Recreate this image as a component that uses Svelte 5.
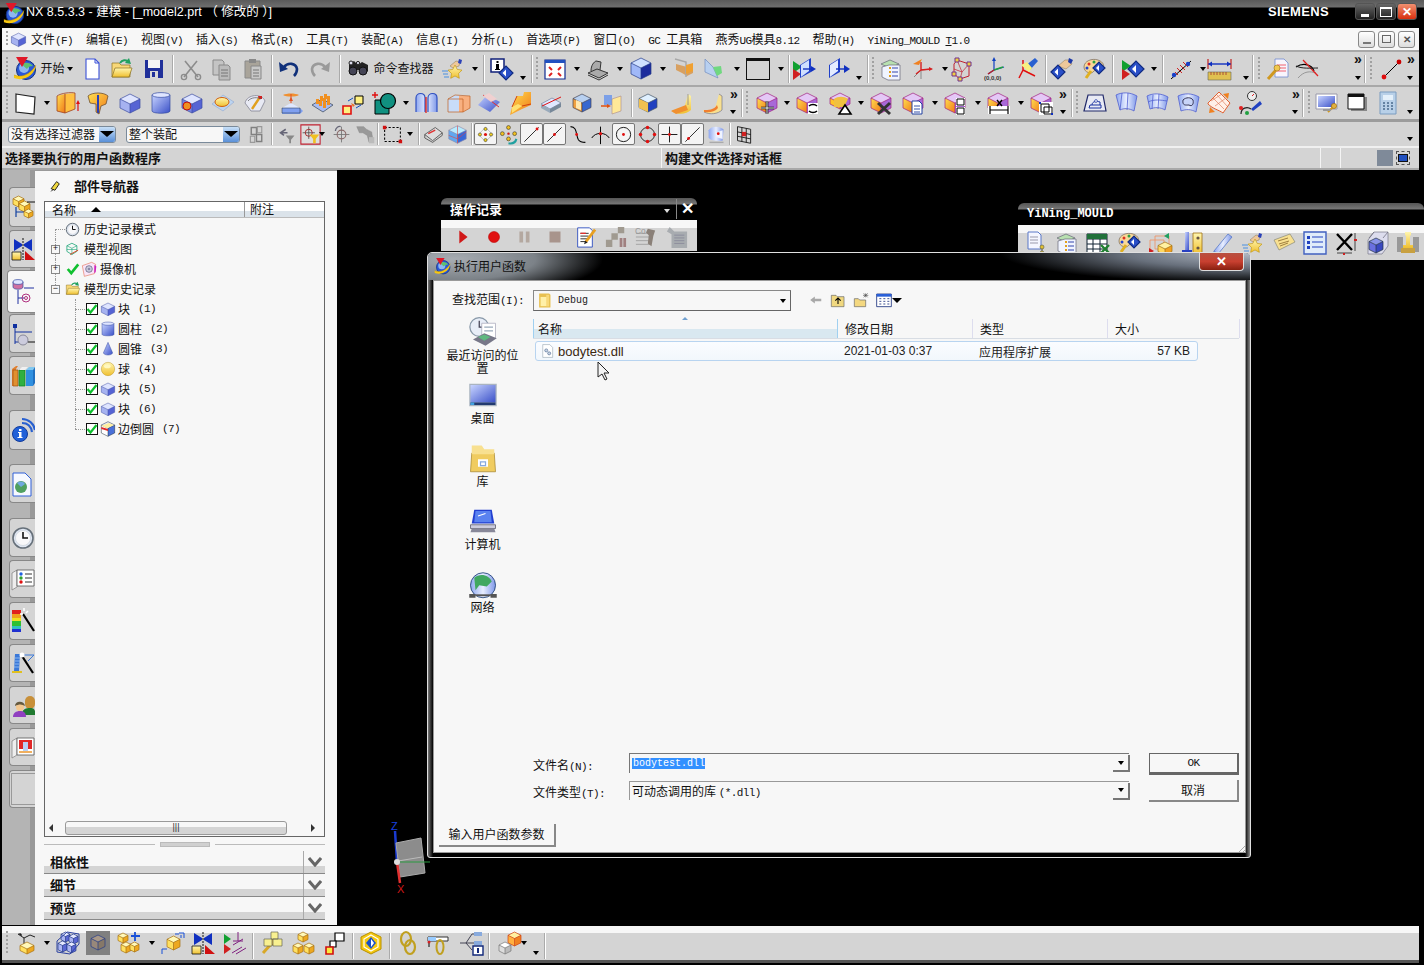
<script>
const P=(d,s='#000',w=1,f='none')=>`<path d="${d}" fill="${f}" stroke="${s}" stroke-width="${w}"/>`;
const F=(d,f='#000')=>`<path d="${d}" fill="${f}"/>`;
const O=(x,y,r,f,s='none',w=1)=>`<circle cx="${x}" cy="${y}" r="${r}" fill="${f}" stroke="${s}" stroke-width="${w}"/>`;
const C=(x,y,w,h,t,l,r,s='#223a88')=>{const a=w*.25,m=x+w/2;return F(`M${x} ${y+a}L${m} ${y}L${x+w} ${y+a}L${m} ${y+2*a}Z`,t)+F(`M${x} ${y+a}L${m} ${y+2*a}V${y+h}L${x} ${y+h-a}Z`,l)+F(`M${x+w} ${y+a}L${m} ${y+2*a}V${y+h}L${x+w} ${y+h-a}Z`,r)+P(`M${x} ${y+a}L${m} ${y}L${x+w} ${y+a}V${y+h-a}L${m} ${y+h}L${x} ${y+h-a}ZM${x} ${y+a}L${m} ${y+2*a}L${x+w} ${y+a}M${m} ${y+2*a}V${y+h}`,s,.7)};
const bc=(x,y,w,h)=>C(x,y,w,h,'#e4e8ff','#aab4f2','#5a66d4');
const yc=(x,y,w,h)=>C(x,y,w,h,'#fff8b8','#ffe060','#eda820','#a87010');
const pf=C(2,2,20,20,'#e4c8f6','url(#go)','#a868d8','#a02080');
const diamond=(x,y,r)=>P(`M${x-r} ${y}L${x} ${y-r}L${x+r} ${y}L${x} ${y+r}Z`,'#102a80',1.2,'#2a50c8')+F(`M${x-r*.5} ${y}L${x} ${y-r*.5}V${y+r*.5}Z`,'#fff');
const starS='M14 8l2.2 4.4 4.8.7-3.5 3.4.8 4.8-4.3-2.3-4.3 2.3.8-4.8-3.5-3.4 4.8-.7z';
const hand=F('M9 9l6-5 4 1-1 4-6 2z','#eec89a')+P('M9 9l6-5 4 1-1 4-6 2z','#875',.5)+F('M18 2l3 1-1 4-3-1z','#2a40b8');
const cyl=(x,y,w,h,c='url(#gb)')=>`<path d="M${x} ${y+2}V${y+h-2}C${x} ${y+h+1} ${x+w} ${y+h+1} ${x+w} ${y+h-2}V${y+2}Z" fill="${c}" stroke="#334aa0" stroke-width=".7"/><ellipse cx="${x+w/2}" cy="${y+2}" rx="${w/2}" ry="2.4" fill="#dfe5ff" stroke="#334aa0" stroke-width=".7"/>`;
const folder=P('M2 20V6h7l2 2h9v12z','#8a7020',.7,'#f8d878')+P('M2 20l3-9h17l-3 9z','#8a7020',.7,'url(#gy)');

const I={
start:O(13,13,9.5,'#2a58d8','#103080')+O(11,11,5,'#8fb8f0')+F('M8 7c4-2 9-2 12 2-3 0-5 1-6 3z','#60c070')+F('M1 18c7 3 16 0 22-10-1 10-12 17-22 13z','#f8c810')+P('M1 18c7 3 16 0 22-10','#c09000',.5)+F('M3 0h12l-6 10z','#e01828'),
new:P('M6 2h9l4 4v16H6z','#3a50d8',1.1,'#fff')+P('M15 2v4h4','#3a50d8'),
open:folder+P('M10 6c2-3 6-4 9-1','#20a060',2)+F('M19 1l2 6-6-1z','#20a060'),
save:F('M3 3h18v18H3z','#20309a')+F('M6 3h12v8H6z','#f4f4f4')+F('M8 14h8v7H8z','#d8d8d8')+F('M10 15h3v5h-3z','#20309a'),
cut:P('M5 20L18 4M19 20L6 4','#8c8c8c',1.6)+O(5,20,2.6,'none','#8c8c8c',1.4)+O(19,20,2.6,'none','#8c8c8c',1.4),
copy:P('M3 3h9l2 2v13H3z','#8a8a8a',1,'#c4c4c4')+P('M9 8h9l2 2v13H9z','#8a8a8a',1,'#bbb')+P('M11 13h7M11 16h7M11 19h7','#777'),
paste:P('M4 4h15v17H4z','#8a8a8a',1,'#a9a49a')+F('M8 2h7v4H8z','#888')+P('M10 9h10v13H10z','#888',1,'#c8c8c8')+P('M12 13h6M12 16h6M12 19h6','#777'),
undo:P('M7 10c4-5 12-4 13 2 0 3-1 5-3 7','#10307a',2.6)+F('M2 5l1 10 8-3z','#10307a'),
redo:P('M17 10c-4-5-12-4-13 2 0 3 1 5 3 7','#9a9a9a',2.6)+F('M22 5l-1 10-8-3z','#9a9a9a'),
binoc:F('M3 7l5-3 4 4 4-3 6 3v6l-4 4-5-5h-2l-3 4-5-3z','#222')+O(7,14,4,'#445','#111')+O(17,14,4,'#445','#111')+O(5,6,2,'#dde','#222')+O(12,6,1.6,'#dde','#222'),
star:hand+P(starS,'#c09000',.6,'url(#gy)')+P('M1 14h6M2 17h5M3 20h5','#4a90e0',1.2),
info:F('M1 2h13v13H1z','#fff')+P('M1 2h13v13H1z','#10207a',1.5)+F('M6.5 4h2v2h-2zM6 7h3v5h1v1H5v-1h1z','#000')+diamond(16,16,7),
fit:P('M2 3h20v19H2z','#102a90',1.2,'#fff')+F('M2 3h20v3H2z','#2050c0')+P('M6 10l3 3M18 10l-3 3M6 19l3-3M18 19l-3-3','#e02020',2),
shade:F('M2 16l9-4 11 4-9 5z','#e0e0e0')+P('M2 16l9-4 11 4-9 5zM5 14c0-6 3-9 5-10l5 1-1 8','#333',1,'#aaa')+P('M2 18l11 5 9-5','#333'),
cubeb:C(2,1,20,21,'#cfe0ff','#a0b8f8','#1c2c9c'),
orange:F('M4 7l11 3 6-2v8l-6 3-5-3-6-3z','#d8a060')+P('M3 2l11 3v15','#a8a8a8',1.5)+F('M14 8l7-2v8l-7 3z','#f0a030'),
green:F('M3 2l8 8 5 11-13-6z','#b8d0f0')+P('M3 2l8 8 5 11-13-6z','#708cc0',.7)+F('M11 10l8-1 1 7-5 3z','#70d880'),
blackrect:F('M0 1h24v22H0z','#111')+F('M1 4h22v18H1z','#d4d4d4'),
wire1:F('M1 4l9 6-9 6z','#10a030')+F('M1 12l8 5-8 6z','#d02020')+F('M8 8l11-7v14L8 21z','#2040c8')+F('M9 8l8-5v11l-8 6z','#cfdfff')+P('M11 12h11','#1030c0',1.4)+F('M24 12l-5-3v6z','#1030c0'),
wire2:F('M3 8l11-7v14L3 21z','#2040c8')+F('M4 8l8-5v11l-8 6z','#e4ecff')+P('M10 12h9','#1030c0',1.4)+F('M24 12l-6-4v8z','#1030c0'),
list:P('M2 7l9-4 9 4-9 4z','#667',.7,'#b8e0b0')+P('M3 10v10l6 3h12V8H10z','#667',.7,'#f0f4ff')+P('M13 11h6M13 15h6M13 19h6','#34a',1)+F('M10 10h2v2h-2zM10 14h2v2h-2zM10 18h2v2h-2z','#e0a020'),
csys1:P('M11 13l-7 7M11 13V22M11 13l11-1','#888')+P('M11 13L11 5M11 13l10-1M11 13l-5 4','#d82020',1.4)+F('M3 7l9-5-3 6z','#f08020')+F('M23 12l-4-2v4z','#d82020'),
boxc:P('M7 3l12 4v12L10 22 4 17V7z','#c02030',1)+P('M7 3l5 12 7-8M12 15l-2 7M4 12l8 3','#c02030',.7)+F('M5 1h4v4H5zM17 5h4v4h-4zM2 15h4v4H2zM8 20h4v4H8z','#f0d040')+P('M5 1h4v4H5zM17 5h4v4h-4zM2 15h4v4H2zM8 20h4v4H8z','#703090',1),
csys0:P('M10 13V2M10 13l10-3M10 13l-6 4','#1040c0',1.2)+P('M10 13l9-3','#20a040',1.4)+P('M10 13l-6 4','#c02020',1.4)+F('M10 0l-2 4h4z','#1040c0')+`<text x="0" y="23" font-size="6" font-weight="700" font-family="Liberation Sans" fill="#333">(0,0,0)</text>`,
csys2:P('M8 13V3M8 13l12 6M8 13l-4 8','#e01010',1.5)+F('M10 9l10-8 3 3-8 9z','#2860d0')+F('M6 8l6-3 5 6-3 4z','#f8f080'),
hand:F('M8 9l7-6h5l2 4-6 5z','#eec89a')+P('M8 9l7-6h5l2 4-6 5z','#875',.5)+F('M19 1l4 2-2 4-3-2z','#1c38a8')+diamond(8,15,7),
palette:F('M2 10C2 4 10 1 16 3c6 2 7 7 4 9-3 1-7 0-9 3-1 2-9 1-9-5z','#f8d898')+P('M2 10C2 4 10 1 16 3c6 2 7 7 4 9-3 1-7 0-9 3-1 2-9 1-9-5z','#765',.7)+O(7,7,1.5,'#e03020')+O(12,5,1.5,'#30a040')+O(5,11,1.5,'#2040d0')+diamond(17,11,6)+P('M9 14l-5 7','#e0b020',3),
run:F('M1 3l9 6-9 6z','#10a030')+F('M1 12l8 5-8 6z','#d02020')+diamond(15,12,8),
ant:P('M2 22L22 4','#000',1)+P('M8 11l5 5M11 8l5 5M14 5l5 5M6 15l3 3','#d02020',1)+O(5,18,2.2,'#1840c8')+O(19,7,2.2,'#1840c8'),
ruler:F('M1 15h23v8H1z','#e0c050')+P('M1 15h23v8H1z','#665',.6)+P('M4 15v3M7 15v3M10 15v3M13 15v3M16 15v3M19 15v3','#a03030',.8)+P('M1 7h23','#1030c0',1.4)+P('M1 2v10M24 2v10','#c02020',1.2)+F('M1 7l4-2.5v5zM24 7l-4-2.5v5z','#1030c0'),
wrdoc:P('M10 2h9l4 4v14H10z','#708ad0',.8,'#f8f4fc')+P('M12 8h9M12 11h9M12 14h9','#f06070',1.2)+P('M3 22l8-9','#d09820',3)+O(12,11,3,'#f0c850','#a07010',.6),
curve:P('M1 10c8-5 16-2 18 4','#000',1.2)+P('M3 21c6-7 12-7 18-5','#888',.8)+P('M8 3l15 16','#e02020',1.2)+P('M1 9c6 3 15 2 22 2','#222',1),
line:P('M5 20L20 5','#000',1)+O(5,20,2.4,'#e01010')+O(20,5,2.4,'#c00'),
sheet:P('M3 3l19 3-1 17-18-2z','#222',1.2,'#fff'),
extrude:F('M2 5l8-2v19l-8-2z','url(#go)')+F('M10 3l10-1v16l-10 4z','#ffc040')+P('M2 5c4-3 14-4 18-3v16M2 5v15l8 2 10-4M10 3v19','#a04020',.8)+P('M23 20v-8','#e01010',1.2)+F('M23 9l-2 4h4z','#e01010'),
revolve:F('M2 5c4-4 16-4 20 0l-2 8-5 2-2 8-3-2V13L4 12z','url(#go)')+F('M11 4h2v18h-2z','#2840b8')+P('M2 5c4-4 16-4 20 0l-2 8-5 2-2 8-3-2V13L4 12z','#705030',.8),
block:C(2,3,20,19,'#dfe5ff','#a6b2f0','#5664d4','#3a4aa0'),
cyl:cyl(3,2,18,20),
holeb:C(2,3,20,19,'#dfe5ff','#7884e0','#5664d4','#3a4aa0')+O(7,15,4,'#f09020','#c01010',1),
boss:P('M1 13L12 4l11 7-11 9z','#90a8d0',.6,'#bcd4f0')+`<ellipse cx="11" cy="11" rx="7" ry="4.5" fill="url(#gy)" stroke="#d06010"/>`,
gauge:P('M2 12C4 3 19 2 22 10l-5 10-9 0z','#778',.7,'#e8eaf4')+P('M9 18L17 6','#e0a020',2.4)+F('M15 5h4v3h-3z','#d02020')+P('M5 10c3-4 10-4 13-2','#555',.7),
draft:F('M4 4c4-2 12-2 16 0-3 2-13 2-16 0z','#f09030')+P('M12 3v10','#e05020',1)+F('M12 6l-2 4h4z','#e05020')+F('M3 17h18l3 3-3 3H3z','#80a0f0')+F('M3 17l9-5 9 5z','#dfe8ff')+P('M3 17h18v5H3z','#234',.5),
pattern:F('M2 14l10-6 11 6-10 7z','#aabcf0')+P('M2 14l10-6 11 6-10 7z','#345',.7)+[[6,12],[10,9],[14,7],[9,14],[13,11],[17,9],[13,16],[17,13]].map(([x,y])=>F(`M${x} ${y-4}h3v5h-3z`,'#f09020')).join(''),
nodes:P('M14 5h8v8h-8z','#000',1,'#fff080')+P('M2 15h8v8H2z','#e01010',1.6,'#fff080')+P('M7 10l5-3M15 17l5-3','#1050c0',1)+F('M10 12l4 2-2 2z','#f07020'),
shapes:F('M2 9h14v14H2z','#109080')+P('M2 9h14v14H2z','#000',1)+O(15,10,7.5,'#109080','#000',1.2)+P('M2 1v6M-1 4h6','#e01010',1.4),
arcs:P('M1 21V7c0-6 9-6 9 0v14M13 21V7c0-6 9-6 9 0v14','#3050c0',1.2,'url(#gl)')+P('M11 6v16','#e01010',1.2),
ghost:F('M2 8l7-4 15 1v12l-7 4H2z','#c8dcf8')+F('M13 5h11v12l-7 4h-4z','#f8b080')+P('M2 8l7-4 15 1v12l-7 4H2zM2 8h15v13','#c06020',.7),
sweepb:F('M1 14l9-10 13 7-10 10z','url(#gb)')+P('M6 4l16 12','#e03030',1)+F('M6 5l6-3 8 6-6 3z','#f0d0d0'),
flange:F('M4 16L9 5h6l1-4h7v13l-9 4-12 6z','url(#go)')+F('M4 16l6-3 4 2-10 7z','#ffe070')+P('M4 16L9 5M14 15l9-2','#d04010',1),
hbar:P('M2 13l11-6 9 5-11 6z','#607090',.6,'#dfe8ff')+F('M2 13v4l9 5v-4z','#9ab')+F('M11 18v4l11-6v-4z','#789')+P('M3 15L22 6','#e01010',1),
shell:C(3,3,18,18,'#b8d0f0','#f0a040','#3868d0','#445')+F('M6 9l5 2v8l-5-2z','#ffe8b0'),
mirror:F('M4 4h8v10H4z','#7ca0e8')+F('M12 8l9-3v15l-9 3z','#ffe898')+P('M12 8l9-3v15l-9 3z','#a88',.6)+P('M1 15h8','#e05010',1.5)+F('M11 15l-4-2v4z','#e05010'),
sec:C(2,3,18,18,'#e0f0ff','#f0a030','#2040c0','#456')+F('M2 8l9 4v9l-9-4z','#f0c050'),
bend1:F('M19 3l3 2v14c-4 4-12 5-18 2l-1-2c6 1 12 0 13-5z','url(#gy)')+F('M17 14L4 19l-2 1 5 3 12-4z','#f09030')+P('M19 3v11','#778',.7),
bend2:F('M19 3l3 2v14c-4 4-12 5-18 2l-1-2c6 1 12 0 13-5z','#f8e090')+P('M19 3l3 2v14c-4 4-12 5-18 2','#778',.7)+F('M4 19c4 0 10 0 13-5l1 3c-3 4-9 5-14 4z','#f08030'),
fmove:pf+P('M12 10v13M6 17h13','#000',2.6)+P('M12 10v13M6 17h13','#fff',1),
fswap:pf+F('M13 12h10v11H13z','#fff')+P('M14 15c2-2 6-2 8 0M22 20c-2 2-6 2-8 0','#000',1.4),
ftri:C(2,2,20,16,'#e4c8f6','#ffc428','#a868d8','#a02080')+F('M6 8c4-3 10-3 14 0l-4 8-10 0z','#f0c040')+P('M17 14l-6 9h12z','#000',1.6,'#fff'),
fx:pf+P('M9 12l12 11M21 12L9 23','#333',3),
fdoc:pf+P('M11 10h7l3 3v10H11z','#2040a0',1,'#fff')+P('M13 15h6M13 18h6M13 21h6','#2040a0',.9),
fsq:pf+F('M13 7h9v8h-9zM13 16h9v8h-9z','#fff')+P('M14 8h7v6h-7zM14 17h7v6h-7z','#000',1),
fdim:pf+F('M2 15h22v8H2z','#fff')+P('M4 15v8M22 15v8M4 19h18','#000',1.2)+P('M11 9l5 6M16 9l-5 6','#000',1.4),
fbox:pf+F('M10 11h14v13H10z','#fff')+P('M12 13h8v8h-8zM15 16h8v7h-8z','#000',1)+F('M10 11h2v2h-2zM22 22h2v2h-2z','#1030c0'),
plate:P('M5 4h15l3 16H1z','#202868',1.2,'#e8eaf4')+P('M7 14h11v3H6zM9 14c0-4 5-4 8-3v3','#1830a0',1)+O(13,10,1.4,'#fff','#1830a0',.7),
surf1:F('M2 4c6-3 14-3 21 1l-3 15c-5-3-10-3-14-1z','url(#gl)')+P('M2 4c6-3 14-3 21 1l-3 15c-5-3-10-3-14-1zM8 2L6 19M14 2l-1 17','#5060d0',.8),
surf2:F('M2 5c6-3 14-3 21 1l-3 13c-5-3-10-3-15-1z','url(#gl)')+P('M2 5c6-3 14-3 21 1l-3 13c-5-3-10-3-15-1zM8 4L7 18M14 3l-1 15M3 11c6-3 13-2 19-1','#5060d0',.8),
surf3:F('M2 5c6-3 14-3 21 1l-3 15c-5-3-10-3-15-1z','url(#gl)')+P('M7 9c3-3 8-3 10 0 1 4-1 7-4 5-3 0-7 1-6-5z','#335',1,'#c8d4f8')+P('M2 5c6-3 14-3 21 1l-3 15c-5-3-10-3-15-1z','#5060d0',.8),
net1:F('M1 12L12 1l11 11-7 10c-4-3-10-4-15-9z','#fff0e8')+P('M1 12L12 1l11 11-7 10c-4-3-10-4-15-9z','#e06030',1)+P('M6 7l11 11M10 4l10 11M4 10l11-7M8 15l11-8','#e08060',.7)+F('M16 3l6-1-1 6zM3 16l5 5-6 1z','#f08020'),
sim:O(14,5,4.5,'#eee','#333',1)+P('M14 5l2-2','#e02020',1)+F('M13 18l9-8 2 3-9 7z','#2040c0')+P('M3 23c0-6 6-8 10-5','#222',1.2)+O(3,17,2,'#e02020')+O(9,22,2,'#20a040'),
screen:F('M1 3h21v15H1z','#fff')+P('M1 3h21v15H1z','#99a',1)+F('M3 5h17v11H3z','url(#gb)')+P('M13 21l6-6','#d09820',2)+O(19,15,2.6,'#e0b040','#a07010',.7)+P('M8 19h8','#999',2),
wnd:F('M6 6h16v14H6z','#888')+F('M3 3h16v15H3z','#fff')+P('M3 3h16v15H3z','#111',1)+F('M3 3h16v3H3z','#111'),
calc:P('M4 1h16v22H4z','#7a9cc0',1,'#b8d0e8')+F('M7 4h10v5H7z','#e4f0fa')+P('M7 12h2M11 12h2M15 12h2M7 15h2M11 15h2M15 15h2M7 18h2M11 18h2M15 18h2','#48698c',1.6),
chains:P('M6 4h6v8H6zM12 12h6v8h-6z','#808080',1.6)+P('M13 3h5v7h-5zM5 14h5v7H5z','#999',1.3),
ffun:P('M10 6l-6 4 4 3M4 10h8','#667',1.8)+F('M10 13h10l-4 5v4h-2v-4z','#888'),
filt:F('M1 1h22v22H1z','#dedede')+P('M1 1h22v22H1z','#c02030',1.2)+P('M10 3v14M3 10h14','#555',1)+O(10,10,4,'none','#a02020',1)+F('M11 12h11l-4 5v5h-3v-5z','#f0c020'),
tgt:P('M12 3v18M3 12h18','#777',1)+O(12,12,5,'none','#8a6a6a',1.2)+P('M5 8c0-4 4-6 6-5','#667',1.5),
gr2:P('M2 3h8l3 3 6 3 2 12h-5l-2-8-5-3H5z','#888',.5,'#999')+F('M16 15h6v7h-6z','#bbb'),
dash:P('M3 4h18v16H3z','#000',1.2).replace('/>',' stroke-dasharray="2.5 2"/>')+F('M1 2h4v4H1zM19 18h4v4h-4z','#d01010'),
v1:F('M2 12L14 4l8 6-11 9z','#ddd')+P('M2 12L14 4l8 6-11 9zM2 12v4l9 5 11-8v-3','#333',.8)+P('M6 11l8-4','#e03030',1.5),
v2:C(2,2,20,20,'#b8ecff','#60a8f0','#3868d8','#88a')+P('M2 13l10 4 10-8M12 2v20','#e04040',.7),
snap0:P('M12 3l9 9-9 9-9-9z','#888',.6,'#f4f4f4')+O(12,12,2,'#e01010')+[[12,5],[12,19],[5,12],[19,12]].map(([x,y])=>O(x,y,2,'#f0d020','#222',.6)).join(''),
snap1:[[12,4],[5,11],[19,11],[12,17]].map(([x,y])=>O(x,y,2.2,'#f0c020','#222',.6)).join('')+O(12,11,1.4,'#d01010')+P('M12 22c5 1 8-1 9-5','#20a0a0',2.4),
ln1:P('M3 21L21 3','#000',1)+O(19,5,1.8,'#e01010'),
ln2:P('M3 21L21 3','#000',1)+O(12,12,1.8,'#e01010'),
tan:P('M4 3c8 0 6 10 9 15 2 3 5 3 8 3','#000',1.2)+O(11,12,1.6,'#e01010'),
perp:P('M2 16c4-7 16-7 20 0M12 3v20','#000',1.1)+O(12,11,1.8,'#e01010'),
cir:O(12,12,9,'none','#000',1.1)+O(12,12,1.8,'#e01010'),
cir4:O(12,12,8,'none','#222',1.1)+[[12,4],[12,20],[4,12],[20,12]].map(([x,y])=>O(x,y,2,'#e01010')).join(''),
plus:P('M12 2v20M2 12h20','#000',1.1)+O(12,12,1.8,'#e01010'),
diag:P('M3 21L21 3','#000',1)+O(7,17,1.8,'#e01010'),
bs:F('M3 7c3-5 12-5 17-1l-1 13c-6 1-13 0-16-3z','url(#gl)')+F('M11 10l8-3v10l-7-2z','#f0f4ff')+O(14,11,1.6,'#e01010')+P('M4 21h16','#aaa',1.6),
grid:P('M4 3l15 3v16L4 19zM9 4v16M14 5v16M4 9l15 3M4 14l15 3','#111',1)+F('M9 9h5v5H9z','#d02020'),
play:F('M8 5l9 7-9 7z','#d01818'),
rec:O(12,12,6,'#e01010','#b00',.6),
pause:F('M7 6h4v12H7zM14 6h4v12h-4z','#b4a8a0'),
stop:F('M6 6h12v12H6z','#a8948c'),
edit:P('M4 2h13l3 3v18H4z','#3050c0',1,'#fff')+P('M7 8h9M7 11h9M7 14h9M7 17h7','#222',1)+P('M7 8h6','#e03030',1.4)+P('M13 17L23 4','#e8a020',3)+F('M11 20l1-4 3 2z','#222'),
gr1:F('M14 1h7v7h-7zM7 8h7v7H7zM1 15h7v8H1z','#a09a90')+F('M16 13h3v10h-3zM20 13h3v10h-3z','#a08080'),
gr3:P('M1 8h16M1 12h16M1 16h16M1 20h16','#a0a0a0',1)+F('M14 3l8 2-2 6-2 11-4-3 1-9-3-3z','#8a8078')+`<text x="0" y="9" font-size="9" font-family="Liberation Sans" fill="#999">Co</text>`,
gr4:F('M4 1l5 5h14v18H6V9L1 6z','#a8acb0')+P('M9 10h11M9 13h11M9 16h11M9 19h11','#889',.9),
doc2:P('M4 1h10l3 3v14H4z','#5a78c8',1,'#f4f6ff')+P('M6 6h8M6 9h8M6 12h8','#99a',1)+P('M18 16v4M14 23h8','#554',1)+O(18,16,2,'#e0c030','#554',.6)+O(18,22,2,'#e0c030','#554',.6),
xl:P('M1 3h20v19H1zM1 8h20M1 13h20M1 18h20M7 3v19M14 3v19','#123',1,'#fff')+F('M1 3h20v5H1z','#20703a')+P('M15 22l8-8M15 14l8 8','#208030',2.4),
orangebox:P('M7 5h14v13H7zM2 9h14v13H2z','#f09060',.8)+C(10,11,14,13,'#fff0a0','#ffd860','#f0a020','#a07010')+F('M1 17l5 3-5 3z','#d02020')+F('M21 2l-5 3 5 3z','#20a060'),
bolt:F('M6 1h4v18H6z','url(#gb)')+F('M3 19h10v4H3z','#2840c0')+F('M14 2h9v21h-9z','url(#gy)')+P('M14 2h9v21h-9z','#a07010',.8)+O(19,7,1.6,'#654')+O(19,17,1.6,'#654'),
pen:F('M4 20L18 3l4 3L8 23z','url(#gl)')+P('M4 20L18 3l4 3L8 23zM4 20l-1 3 5 0','#5878c8',.8),
tag:F('M2 9L18 3l5 8-16 8z','#f8e090')+P('M2 9L18 3l5 8-16 8z','#887',.7)+P('M6 10l10-3M7 13l10-3M8 15l8-3','#a08040',1),
lst2:F('M1 1h22v22H1z','#e0ecfa')+P('M1 1h22v22H1z','#4060c0',1.4)+F('M4 5h3v3H4zM4 10h3v3H4zM4 15h3v3H4z','#2040c0')+P('M9 6h11M9 11h11M9 16h11','#2040c0',1.2),
xdim:P('M3 3l15 16M18 3L3 19','#000',2.4)+P('M3 22h15M21 2v18','#333',.9)+F('M20 8h3v2h-3z','#d02020')+F('M9 22h2v2H9z','#d02020'),
cb:P('M9 1h14v14l-6 8H3V9z','#778',.7,'#dde')+C(4,7,14,15,'#8a94e8','#6a70e0','#3a48c0','#234')+P('M9 1l-5 6M23 1l-5 6','#667',.7),
pin:F('M9 1h6v3l-1 1v9h3l2 3H5l2-3h3V5L9 4z','url(#gy)')+F('M1 6h6v15H1zM17 6h6v15h-6z','#999')+F('M5 17h14v5H5z','#c8a040'),
asm:yc(2,1,11,11)+yc(8,6,11,11)+P('M5 12v10M5 17h8','#1040a0',1.2)+yc(13,14,9,9)+P('M16 7h8','#111',1),
constr:F('M3 2l8 5v2L3 14zM21 2l-8 5v2l8 5z','#1030c0')+P('M12 1v22','#111',1).replace('/>',' stroke-dasharray="2 1"/>')+F('M1 15h9v8H1z','url(#gy)')+P('M1 15h9v8H1z','#111',.8)+F('M14 23l10 0-10-9z','#d01010'),
partnav:cyl(3,0,10,9,'#d070a0')+P('M14 8h10M8 10v14M8 18h6','#2030a0',1)+O(16,18,4,'none','#b03080',1)+O(16,18,1.5,'none','#b03080',1),
reuse:F('M2 2l4 0 0 4-4 0z','#1030a0')+P('M4 6v16M4 10h17M4 20h4','#1030a0',1)+O(12,18,5,'#ccd','#889',1)+P('M17 20h7','#111',1),
books:F('M1 5l4-3h2l-2 3v17H1z','#e08030')+F('M2 6h5v16H2z','#e09030')+P('M2 6h5v16H2z','#a05010',.7)+F('M8 6h6v16H8z','#30b040')+P('M8 6h6v16H8z','#108020',.7)+F('M15 6h7v16h-7z','#3090e0')+F('M15 6l3-3h6l-2 3z','#80c8f0')+F('M8 6l3-3h6l-3 3z','#f0f0f0')+F('M22 6l2-3v16l-2 3z','#2070c0'),
infow:O(9,16,7.5,'#2060d8','#113a9a')+F('M8 11h2.5v2H8zM7 14h3.5v5h1v1H6.5v-1H8v-4H7z','#fff')+P('M11 5c5 0 9 3 10 9M11 1c7 0 12 5 13 11','#2860d0',2.2),
docglobe:P('M2 1h12l6 6v17H2z','#3060d8',1,'#f6f8ff')+O(10,15,6,'#50a060')+F('M6 11c3-2 6-2 8 1l-4 3z','#70a8e0'),
clock:O(12,12,10,'#dfe6f2','#66707a',1.6)+O(12,12,7.5,'#f8f8fa','#c0c8d0',.5)+P('M12 6v6h5','#111',1.6),
listdoor:P('M1 6l5-3v17l-5 3z','#888',.8,'#eee')+F('M6 3h17v16H6z','#fff')+P('M6 3h17v16H6z','#555',.8)+O(10,7,1.7,'#2060e0')+O(10,11,1.7,'#30a030')+O(10,15,1.7,'#e01010')+P('M14 7h7M14 11h7M14 15h7','#333',1),
rainbow:F('M1 1h9v4H1z','#e02020')+F('M1 5h9v4H1z','#f0a020')+F('M1 9h9v3H1z','#f0e020')+F('M1 12h9v5H1z','#30c030')+F('M1 17h9v3H1z','#30c0c0')+F('M1 20h9v3H1z','#2030d0')+P('M12 5l11 17','#000',2.2)+P('M12 5h-3M13 2v-3M15 4l2-2','#fff',1.6),
wand2:F('M4 3h5l-1 17H3z','#3a78d8')+P('M4 7h5M4 10h5M4 13h4M3 16h5','#a0c8f8',.8)+P('M1 21h10','#e0c020',2)+P('M9 4h14l-6 6','#3a78d8',1)+P('M11 5l11 17','#000',2.2)+O(11,4,2.5,'#fff'),
people:F('M14 8a5 5 0 0 1 10 0v3a5 5 0 0 1-10 0z','#c8903a')+F('M11 20c1-4 4-5 8-5s4 1 5 3v4H11z','#207a30')+O(9,14,4,'#f4c890')+F('M4 13c0-5 9-6 10 0-3-2-6-2-10 0z','#665a40')+F('M2 24c0-4 3-6 7-6s6 2 6 6z','#9040c0'),
slide:P('M1 6l5-3v17l-5 3z','#888',.8,'#eee')+F('M6 3h17v17H6z','#fff')+P('M6 3h17v17H6z','#555',.8)+F('M8 5h13v9H8z','#e02828')+F('M12 7h5v9h-5z','#b8d0f4')+F('M8 16h13v2H8z','#f0b060'),
modelview:P('M3 6l8-4 8 4v9l-8 5-8-5z','#10a070',1.2)+P('M3 6l8 4 8-4M11 10v10M3 12h16','#10a070',.9)+P('M8 20l13-7','#e04020',1.5),
camera:P('M2 7l14-5 6 3-2 14L5 23z','#e06040',.8,'#f8e4f8')+O(12,12,5,'#ccd','#557',1)+O(12,12,2,'#88a')+F('M20 6l3 2-1 9-2 1z','#d020c0'),
cone:F('M12 2l7 16c-2 4-12 4-14 0z','url(#gb)')+P('M12 2l7 16c-2 4-12 4-14 0z','#334aa0',.7),
ball:O(12,12,10,'url(#gy)','#b89020',.7)+`<ellipse cx="11" cy="8" rx="5" ry="3" fill="#fff8c0"/>`,
edge:C(2,1,20,22,'#e4e8ff','#fff','#4a70d8','#123')+F('M2 7l11-4 8 3-10 5z','#fff0a0')+F('M2 9l10 3v3L2 12z','#e02828'),
navpin:F('M4 16L14 3l5 4-8 12z','#f0d840')+P('M4 16L14 3l5 4-8 12z','#000',1.5)+P('M4 21l4-4','#000',1.6),
check:P('M3 12l6 7L21 4','#10c030',4.5),
dll:P('M3 1h12l5 5v17H3z','#7a8a9a',.8,'#fff')+O(9,11,2.6,'#c8d4e4','#44608a',1)+O(14,16,2.6,'#c8d4e4','#44608a',1),
recent:O(9,8,7.5,'#e8eef8','#8898a8')+P('M9 3v5h4','#445',1)+P('M11 5h11v12H11z','#aab',.6,'#fff')+P('M13 8h7M13 11h7','#9ab',1)+F('M4 18l9-5 10 4-9 6z','#778')+F('M8 16l5-2 5 2-5 3z','#60b880'),
desk:F('M1 3h22v18H1z','#aab4c0')+F('M2 4h20v14H2z','url(#gb)')+F('M2 18h20v2H2z','#223a70')+F('M2 18h3v2H2z','#40a0e0'),
lib:F('M3 8h18l1 15H2z','#f0cc60')+P('M3 8h18l1 15H2z','#a88830',.6)+F('M3 2h8l2 3h8v4H3z','#f8e090')+F('M8 13h8v6H8z','#fff')+P('M10 15h4v3h-4z','#88aadd',1),
comp:F('M5 3h14l2 11H3z','#223fd0')+F('M6 4h12l1 9H5z','#5a82f0')+F('M2 15h20v3H2z','#ccd')+P('M2 15h20v3H2z','#556',.6)+F('M3 18h18l1 3H2z','#889')+P('M8 8l6-2','#fff',1),
netw:O(12,13,10,'url(#gl)','#247',.7)+F('M5 7c5-4 12-2 14 3l-4 4-6-1-3 4z','#40a860')+F('M1 20h5v3H1zM18 20h5v3h-5z','#555')+P('M6 21h12','#555',1.5),
back:F('M2 12l8-6v4h11v4H10v4z','#a8a8a8'),
up:P('M2 22V5h7l2 2h10v15z','#666',1,'#f0d880')+P('M12 18v-8M8 13l4-4 4 4','#000',1.6),
newf:P('M2 22V10h6l2 2h9v10z','#666',1,'#f4d880')+P('M19 2v6M15 5h8M16 2l6 6M22 2l-6 6','#444',.9),
view:P('M1 3h22v19H1z','#12287a',1.2,'#fff')+F('M1 3h22v4H1z','#2a60d8')+P('M5 10h3M11 10h3M17 10h3M5 14h3M11 14h3M17 14h3M5 18h3M11 18h3M17 18h3','#12287a',1.2),
folderdbg:F('M3 2h14l2 2v18H3z','#e8c050')+F('M5 7h12v13H5z','#fff0a8')+F('M13 4h4v16h-4z','#f8d878'),
b1:P('M3 3l6 4 6-3 5 2M9 7v9','#222',1)+F('M3 3c3-2 4 0 4 2z','#222')+C(5,11,14,12,'#fff8b8','#ffe060','#eda820','#a87010'),
bcubes:bc(5,1,9,10)+bc(13,3,9,10)+bc(2,10,9,11)+bc(11,11,9,11)+P('M1 10l10-9 12 2v10l-9 10-13-2z','#2a40a0',1),
bgray:F('M0 0h24v24H0z','#808080')+C(5,4,14,15,'#a89888','#98887a','#867868'),
bplus:yc(1,2,10,10)+yc(4,11,10,11)+yc(13,11,9,10)+P('M18 1v9M14 5h9','#1850d8',1.8),
bcorner:P('M18 2h5v5M1 23v-5h5M14 3h4M20 7v-3','#1850d8',1)+yc(6,5,13,14),
brun:F('M1 3l7 5-7 5z','#10a030')+F('M1 13l7 5-7 5z','#d02020')+P('M10 14l10-6','#802080',1)+P('M15 1v9M10 10h10','#802080',1)+P('M9 22l10-6M13 23l10-6','#802080',1),
bkey:P('M3 22l9-10','#d8a828',3)+O(13,11,3,'#f0c040','#a07010',.7)+P('M11 1h7v7h-7zM4 8h8v7H4zM13 8h9v7h-9z','#665',.7,'#f8f090'),
b3c:yc(7,1,10,10)+yc(2,12,10,11)+yc(13,12,10,11),
bsq:P('M12 2h9v8h-9z','#000',1.2,'#fff')+P('M7 10h6v6H7z','#000',1.2,'#fff')+P('M3 16h7v7H3z','#d01010',1.6,'#f8e840'),
bhex:P('M12 1l10 5v12l-10 5-10-5V6z','#b89000',1,'#f4c810')+F('M12 6l5 6-5 6-5-6z','#1850c8')+F('M12 8l3 4-3 4z','#fff')+P('M12 4l7 4v8l-7 4-7-4V8z','#fff',1.2),
blink:`<ellipse cx="10" cy="8" rx="5" ry="7" fill="none" stroke="#c0a020" stroke-width="2.2"/><ellipse cx="14" cy="16" rx="5" ry="7" fill="none" stroke="#c0a020" stroke-width="2.2"/>`,
blink2:P('M2 6h20v4H2z','#333',1,'#fff')+F('M2 6h8v4H2z','#9cf')+P('M3 10v6','#000',1)+O(3,11,1.5,'#d02020')+`<ellipse cx="14" cy="16" rx="3.5" ry="7" fill="none" stroke="#c0a020" stroke-width="2"/>`,
btree:P('M1 12h6l6-9h5M7 12h11M7 12l6 7','#445',1)+F('M15 1h8v4h-8zM15 10h8v4h-8z','#88aadd')+F('M14 15h10v9H14z','#fff')+P('M14 15h10v9H14z','#12287a',1.4)+F('M18 17h2v5h-2z','#12287a'),
bstack:C(10,1,13,14,'#fff0a0','#ffb040','#f08020','#d04010')+C(1,11,12,12,'#fff','#ddd','#bbb','#777'),
};

const W={g:4,a:9,A:9,s:2,'>>':10,t1:24,t2:60,c1:108,c2:114};
function parse(str,size=24){
  let right=2;
  return str.trim().split(/\s+/).map(tok=>{
    let [n,c]=tok.split('@');
    const b=n.endsWith('!'); if(b) n=n.slice(0,-1);
    const w=W[n]??(b?23:size);
    const left=+c-w/2, m=left-right; right=left+w;
    return {n,w,m,b};
  });
}
const r1=parse(`g@7 start@25 t1@52.5 a@70 new@92 open@122 save@154 s@173 cut@191 copy@222 paste@253 s@272 undo@289 redo@320 s@340 binoc@358 t2@403.5 star@453 a@475 s@484 info@502 A@523 s@532 g@537 fit@555 a@577 shade@598 a@620 cubeb@641 a@663 orange@684 green@714 a@737 blackrect@758 a@781 s@789 wire1@804 wire2@838 A@859 s@868 g@873 list@891 csys1@922 a@945 boxc@962 csys0@996 csys2@1027 s@1046 hand@1062 palette@1094 s@1113 run@1133 a@1154 s@1163 ant@1181 a@1203 ruler@1219 A@1246 s@1253 g@1259 wrdoc@1277 curve@1307 >>@1358 A@1358 s@1365 g@1371 line@1391 >>@1411 A@1410`);
const r2=parse(`g@7 sheet@25 a@47 extrude@67 revolve@98 block@130 cyl@161 holeb@192 boss@223 gauge@255 s@272 draft@291 pattern@322 nodes@353 shapes@385 a@406 arcs@427 ghost@458 sweepb@489 flange@520 hbar@551 shell@582 mirror@612 s@632 sec@649 bend1@681 bend2@712 >>@734 A@733 s@742 g@747 fmove@767 a@787 fswap@807 ftri@840 a@861 fx@881 fdoc@913 a@935 fsq@955 a@978 fdim@998 a@1021 fbox@1041 >>@1063 A@1063 s@1072 g@1077 plate@1095 surf1@1126 surf2@1157 surf3@1188 net1@1219 sim@1250 >>@1296 A@1295 s@1303 g@1309 screen@1327 wnd@1357 calc@1388 A@1410`);
const r3=parse(`c1@62 c2@183 chains@256 s@272 ffun@287 filt@310 a@322 tgt@341 gr2@365 s@378 dash@392 a@410 s@419 v1@433 v2@457 s@472 snap0!@485.5 snap1@508 ln1!@531.5 ln2!@554.5 tan@577 perp@600 cir!@623.5 cir4@647 plus!@669.5 diag!@692.5 bs@716 s@730 grid@744 A@1410`,21);
const r4=parse(`g@7 b1@27 a@47 bcubes@68 bgray@98 bplus@129 a@152 bcorner@173 constr@203 brun@235 s@253 bkey@272 b3c@303 bsq@335 s@353 bhex@371 s@390 blink@408 blink2@438 btree@471 s@489 bstack@510 a@524 A@536 s@545`);
const logIc=['play','rec','pause','stop','edit','gr1','gr3','gr4'];
const yiIc=['doc2','list','xl','palette','orangebox','bolt','pen','star','tag','lst2','xdim','cb','pin'];
const menu=[['文件','(F)'],['编辑','(E)'],['视图','(V)'],['插入','(S)'],['格式','(R)'],['工具','(T)'],['装配','(A)'],['信息','(I)'],['分析','(L)'],['首选项','(P)'],['窗口','(O)']];
const tabs=[['asm',40,3],['constr',38,3],['partnav',43,2,true],['reuse',39,1],['books',39,3],['infow',40,15],['docglobe',39,14],['clock',39,15],['listdoor',38,3],['rainbow',38,4],['wand2',38,4],['people',38,4],['slide',38,4],['',38,4]];
const hist=[['block','块','(1)'],['cyl','圆柱','(2)'],['cone','圆锥','(3)'],['ball','球','(4)'],['block','块','(5)'],['block','块','(6)'],['edge','边倒圆','(7)']];
const places=[['recent','最近访问的位置'],['desk','桌面'],['lib','库'],['comp','计算机'],['netw','网络']];
</script>

{#snippet ic(n,s=24)}
  <svg class="ic" width={s} height={s} viewBox="0 0 24 24" overflow="visible">{@html I[n]}</svg>
{/snippet}

{#snippet bar(items,s)}
  {#each items as it}
    <span class="it" class:boxed={it.b} class:up={it.n==='>>'} class:dn={it.n==='A'} style:margin-left="{it.m}px" style:width="{it.w}px">
      {#if it.n==='g'}<i class="grip"></i>
      {:else if it.n==='s'}<i class="sep"></i>
      {:else if it.n==='a'||it.n==='A'}<i class="tri"></i>
      {:else if it.n==='>>'}<b class="chev">»</b>
      {:else if it.n==='t1'}<span class="tx">开始</span>
      {:else if it.n==='t2'}<span class="tx">命令查找器</span>
      {:else if it.n==='c1'}<span class="cmb"><span>没有选择过滤器</span><i class="cbtn"><i class="tri big"></i></i></span>
      {:else if it.n==='c2'}<span class="cmb"><span>整个装配</span><i class="cbtn"><i class="tri big"></i></i></span>
      {:else}{@render ic(it.n,s)}{/if}
    </span>
  {/each}
{/snippet}

<svg class="defs" width="0" height="0" aria-hidden="true"><defs>
  <linearGradient id="gb" x1="0" y1="0" x2="1" y2="1"><stop offset="0" stop-color="#c8d4ff"/><stop offset="1" stop-color="#3a50c8"/></linearGradient>
  <linearGradient id="gl" x1="0" y1="0" x2="1" y2="0"><stop offset="0" stop-color="#8fa8f0"/><stop offset=".5" stop-color="#e8eeff"/><stop offset="1" stop-color="#7f98e8"/></linearGradient>
  <linearGradient id="gy" x1="0" y1="0" x2="0" y2="1"><stop offset="0" stop-color="#fff6b0"/><stop offset="1" stop-color="#f0c030"/></linearGradient>
  <linearGradient id="go" x1="0" y1="0" x2="1" y2="1"><stop offset="0" stop-color="#ffe050"/><stop offset="1" stop-color="#f07818"/></linearGradient>
</defs></svg>

<div class="app">
  <header class="title">
    <span class="tlogo">{@render ic('start',22)}</span>
    <span class="ttext">NX 8.5.3.3 - 建模 - [_model2.prt （ 修改的 ）]</span>
    <b class="siemens">SIEMENS</b>
    <span class="wbtn"><i class="mn"></i></span><span class="wbtn"><i class="mx"></i></span><span class="wbtn cl">✕</span>
  </header>

  <div class="shell">
    <nav class="menu">
      <i class="grip"></i>
      <span class="mlogo">{@render ic('block',17)}</span>
      <div class="mitems">
        {#each menu as m}<span>{m[0]}<em>{m[1]}</em></span>{/each}
        <span><em class="gc">GC</em>工具箱</span>
        <span>燕秀<em>UG</em>模具<em>8.12</em></span>
        <span>帮助<em>(H)</em></span>
        <span><em>YiNing_MOULD <u>T</u>1.0</em></span>
      </div>
      <div class="mdi"><span><i class="mn"></i></span><span><i class="mx"></i></span><span>✕</span></div>
    </nav>

    <div class="tb r1">{@render bar(r1,24)}</div>
    <div class="tb r2">{@render bar(r2,24)}</div>
    <div class="tb r3">{@render bar(r3,21)}</div>

    <div class="cue">
      <b class="c1">选择要执行的用户函数程序</b>
      <b class="c2">构建文件选择对话框</b>
      <i class="cs"></i><i class="cs"></i>
      <span class="cg"></span>
      <span class="cv"><i></i></span>
    </div>

    <main class="main">
      <aside class="tabs">
        {#each tabs as t}
          <div class="tab" class:on={t[3]} style:height="{t[1]}px" style:margin-top="{t[2]}px">
            {#if t[0]}{@render ic(t[0],24)}{:else}<i class="blank"></i>{/if}
          </div>
        {/each}
      </aside>

      <section class="panel">
        <div class="ptitle"><span>{@render ic('navpin',13)}</span><b>部件导航器</b></div>
        <div class="tree">
          <div class="thead">
            <span class="h1">名称<i class="caret"></i></span><span class="h2">附注</span>
          </div>
          <div class="rows">
            <div class="row top first"><span class="exp none"></span><span class="ti">{@render ic('clock',15)}</span><span>历史记录模式</span></div>
            <div class="row top"><span class="exp">+</span><span class="ti">{@render ic('modelview',15)}</span><span>模型视图</span></div>
            <div class="row top"><span class="exp">+</span><span class="ti">{@render ic('check',14)}</span><span class="ti2">{@render ic('camera',16)}</span><span>摄像机</span></div>
            <div class="row top lasttop"><span class="exp">−</span><span class="ti">{@render ic('open',16)}</span><span>模型历史记录</span></div>
            {#each hist as h,k}
              <div class="row kid" class:lastkid={k===6}>
                <span class="cb">{@render ic('check',12)}</span>
                <span class="ki">{@render ic(h[0],16)}</span>
                <span>{h[1]}</span><em>{h[2]}</em>
              </div>
            {/each}
          </div>
          <div class="hscroll">
            <i class="tl"></i>
            <div class="thumb"><span>|||</span></div>
            <i class="tr"></i>
          </div>
        </div>
        <div class="sash"><i></i><b></b><i></i></div>
        {#each ['相依性','细节','预览'] as s}
          <div class="acc"><b>{s}</b><span class="vv"><svg width="14" height="10" viewBox="0 0 14 10"><path d="M1 1l6 7 6-7" fill="none" stroke="#666" stroke-width="3"/></svg></span></div>
        {/each}
      </section>

      <section class="canvas">
        <div class="fl log">
          <div class="fhead"><b>操作记录</b><i class="tri wt"></i><span class="fx">✕</span></div>
          <div class="fbar">{#each logIc as n}{@render ic(n,22)}{/each}</div>
        </div>
        <div class="fl yi">
          <div class="fhead"><b class="mono">YiNing_MOULD</b></div>
          <div class="fbar">{#each yiIc as n}{@render ic(n,24)}{/each}</div>
        </div>

        <svg class="triad" width="50" height="85" viewBox="0 0 50 85">
          <text x="1" y="12" font-size="11" fill="#1840e0" font-family="Liberation Sans">Z</text>
          <path d="M5 13L7 44" stroke="#1a3ad0" stroke-width="2.5"/>
          <path d="M6 25l25-5 4 35-25 4z" fill="#8c8c8c" stroke="#aaa"/>
          <path d="M8 43l24-4" stroke="#bbb"/>
          <path d="M7 44H40" stroke="#2a9a40" stroke-width="1.2"/>
          <path d="M7 44L10 65" stroke="#e03030" stroke-width="2.5"/>
          <circle cx="7" cy="44" r="3" fill="#ddd"/>
          <text x="7" y="75" font-size="11" fill="#d01818" font-family="Liberation Sans">X</text>
        </svg>

        <div class="dlg">
          <div class="dhead">
            <span class="dlogo">{@render ic('start',17)}</span>
            <span class="dtitle">执行用户函数</span>
            <span class="dclose">✕</span>
          </div>
          <div class="dbody">
            <div class="dtop">
              <label>查找范围<em>(I):</em></label>
              <div class="look">{@render ic('folderdbg',17)}<span class="mono sm">Debug</span><i class="tri"></i></div>
              <div class="dtools">
                {@render ic('back',14)}{@render ic('up',16)}{@render ic('newf',16)}{@render ic('view',16)}<i class="tri big2"></i>
              </div>
            </div>
            <div class="places">
              {#each places as p,k}
                <div class="place" class:first={k===0}>{@render ic(p[0],30)}<span>{p[1]}</span></div>
              {/each}
            </div>
            <div class="files">
              <div class="fh">
                <span class="c-n">名称<i class="sort"></i></span><span>修改日期</span><span>类型</span><span>大小</span>
              </div>
              <div class="fr">
                <span class="c-f">{@render ic('dll',14)}<span>bodytest.dll</span></span>
                <span>2021-01-03 0:37</span><span>应用程序扩展</span><span class="sz">57 KB</span>
              </div>
            </div>
            <div class="form">
              <label>文件名<em>(N):</em></label>
              <div class="fld f1"><span class="sel mono">bodytest.dll</span><span class="drop"><i class="tri"></i></span></div>
              <div class="btn ok"><em>OK</em></div>
              <label>文件类型<em>(T):</em></label>
              <div class="fld f2"><span>可动态调用的库 <em>(*.dll)</em></span><span class="drop"><i class="tri"></i></span></div>
              <div class="btn">取消</div>
            </div>
            <div class="dfoot"><div class="btn arg">输入用户函数参数</div></div>
            <svg class="cursor" width="14" height="20" viewBox="0 0 14 20"><path d="M1 1v15l4-3 3 6 2-1-3-6h5z" fill="#f4f4f4" stroke="#222"/></svg>
            <i class="grabber"></i>
          </div>
        </div>
      </section>
    </main>

    <div class="tb r4">{@render bar(r4,24)}</div>
  </div>
</div>

<style>
  :global(html),:global(body){margin:0;background:#000;overflow:hidden}
  .defs{position:absolute}
  .app{width:1424px;height:965px;background:#000;color:#111;font:12px/1.2 "Noto Sans CJK SC",sans-serif;position:relative;overflow:hidden}
  i{display:block;font-style:normal}
  em{font:normal 11px "Liberation Mono",monospace;letter-spacing:-.6px}
  .gc{margin-right:6px}
  .mono{font-family:"Liberation Mono",monospace}
  .ic{display:block;flex:none}

  .title{height:28px;display:flex;align-items:flex-start;background:linear-gradient(#5a5a5a 0,#6e6e6e 7px,#000 8px);color:#fff;position:relative}
  .tlogo{margin:3px 0 0 3px}
  .ttext{font:12.5px/1 "Liberation Sans","Noto Sans CJK SC",sans-serif;margin:6px 0 0 1px;width:300px;white-space:nowrap}
  .siemens{font:800 13px/1 "Liberation Sans",sans-serif;margin:5px 0 0 942px;letter-spacing:.35px;width:87px}
  .wbtn{width:20px;height:17px;margin-right:1px;margin-top:3px;background:linear-gradient(#666,#222);border:1px solid #555;border-radius:3px;box-sizing:border-box;display:flex;align-items:center;justify-content:center;color:#fff;font-size:12px}
  .wbtn.cl{background:linear-gradient(#f09070,#d83010);font-weight:700}
  .wbtn .mn{width:8px;height:3px;background:#fff;margin-top:7px}
  .wbtn .mx{width:10px;height:7px;border:1px solid #fff;border-top-width:2px}

  .shell{margin:0 5px 0 2px;display:flex;flex-direction:column;width:1417px}
  .menu{height:22px;background:#f7f7f7;display:flex;align-items:center;border-bottom:2px solid #a8a8a8;position:relative}
  .menu>.grip{margin-left:4px;height:16px}
  .mlogo{margin-left:2px}
  .mitems{display:flex;gap:13px;margin-left:4px;white-space:nowrap;flex:1}
  .mitems span{line-height:22px}
  .mdi{display:flex;gap:3px;margin-right:4px}
  .mdi span{width:15px;height:15px;border:1px solid #888;border-radius:3px;background:linear-gradient(#fff,#ddd);display:flex;align-items:center;justify-content:center;font-size:10px;color:#555;font-weight:700}
  .mdi .mn{width:8px;height:2px;background:#777;margin-top:7px}
  .mdi .mx{width:7px;height:6px;border:1px solid #666}

  .tb{background:#d4d4d4;display:flex;align-items:center;position:relative;white-space:nowrap}
  .r1{height:33px;border-bottom:2px solid #a8a8a8}
  .r2{height:32px;border-bottom:3px solid #9c9c9c}
  .r3{height:24px;border-bottom:2px solid #f0f0f0}
  .r4{height:34px;margin-top:1px;background:linear-gradient(#f7f7f7 0,#f7f7f7 7px,#d4d4d4 7px);border-bottom:3px solid #555}
  .it{display:flex;align-items:center;justify-content:center;flex:none;height:100%}
  .it.up{align-self:flex-start;height:14px}
  .it.dn{align-self:flex-end;height:14px}
  .it.boxed{height:22px;background:#f4f4f4;border:1px solid #777;border-radius:2px;box-sizing:border-box}
  .it.boxed .ic{width:19px;height:19px}
  .grip{width:2px;height:24px;background:repeating-linear-gradient(#a0a0a0 0 2px,transparent 2px 4px)}
  .sep{width:2px;height:28px;background:linear-gradient(90deg,#aaa 50%,#fff 50%)}
  .r3 .sep{height:22px}
  .r4 .sep{height:26px;margin-top:6px}
  .tri{width:0;height:0;border:3.5px solid transparent;border-top:4px solid #000;border-bottom:0}
  .tri.big{border-width:6px 7px 0;border-top-color:#000}
  .tri.wt{border-top-color:#ccc}
  .chev{font:700 14px/10px "Liberation Sans",sans-serif;color:#111}
  .tx{font-size:12px;color:#111;white-space:nowrap}
  .cmb{display:flex;align-items:center;justify-content:space-between;width:100%;height:17px;box-sizing:border-box;background:#f7f7f7;border:1px solid #7a8a9a;border-radius:3px;padding-left:2px;overflow:hidden}
  .cbtn{width:16px;height:15px;background:linear-gradient(#c8e0f8,#5a90d8);display:flex;align-items:center;justify-content:center;flex:none}

  .cue{height:20px;background:#d4d4d4;border-bottom:2px solid #a8a8a8;display:flex;align-items:center;font-size:13px}
  .c1{margin-left:3px;width:656px}
  .c2{border-left:1px solid #f4f4f4;height:20px;line-height:20px;padding-left:3px;width:655px}
  .cs{width:1px;height:20px;background:#f4f4f4;margin-right:19px}
  .cg{width:16px;height:16px;background:#7f8a99;margin-left:17px}
  .cv{width:14px;height:14px;margin-left:3px;display:flex;align-items:center;justify-content:center;outline:1px dashed #555;outline-offset:-1px}
  .cv i{width:8px;height:6px;background:#2050c0;border:1px solid #111}

  .main{display:flex;height:755px}
  .tabs{width:33px;flex:none;background:linear-gradient(90deg,#b4b4b4 0,#b4b4b4 28px,#999 28px);padding-top:14px;box-sizing:border-box;display:flex;flex-direction:column;align-items:flex-end;overflow:hidden}
  .tab{width:26px;box-sizing:border-box;background:#d4d4d4;border:1px solid #888;border-right:0;border-radius:4px 0 0 4px;display:flex;align-items:center;justify-content:center;flex:none}
  .tab.on{width:28px;background:#f7f7f7}
  .blank{width:23px;height:30px;border:1px solid #999;border-right:0}

  .panel{width:302px;flex:none;background:#f7f7f7;display:flex;flex-direction:column;border-top:1px solid #999;box-sizing:border-box;padding-bottom:5px}
  .ptitle{height:30px;display:flex;align-items:center;font-size:13px;padding-left:14px;gap:12px;flex:none}
  .tree{margin:0 12px 0 9px;border:1px solid #666;flex:1;display:flex;flex-direction:column;min-height:0}
  .thead{height:15px;display:flex;background:linear-gradient(#fff 0 9px,#dbe3ea 9px);border-bottom:1px solid #bbb;font-size:12px;line-height:14px;flex:none}
  .h1{width:200px;box-sizing:border-box;padding-left:7px;border-right:1px solid #999;display:flex;align-items:center;gap:15px}
  .h2{padding-left:5px}
  .caret{width:0;height:0;border:5px solid transparent;border-bottom:5px solid #000;border-top:0}
  .rows{flex:1;padding-top:1px}
  .row{height:20px;display:flex;align-items:center;position:relative;white-space:nowrap;font-size:12px}
  .exp{width:7px;height:7px;border:1px solid #888;background:#f7f7f7;margin-left:6px;font:9px/7px "Liberation Mono",monospace;text-align:center;flex:none;color:#111;position:relative;z-index:1}
  .exp.none{border-color:transparent;background:none}
  .top .ti{width:15px;margin-left:5px;margin-right:4px;display:flex;justify-content:center;flex:none}
  .top .ti2{margin-left:-3px;margin-right:3px}
  .top::before{content:"";position:absolute;left:10px;top:0;height:20px;border-left:1px dotted #999}
  .top.first::before{top:10px;height:10px}
  .top.lasttop::before{height:10px}
  .top.first::after{content:"";position:absolute;left:10px;top:10px;width:10px;border-top:1px dotted #999}
  .kid::before{content:"";position:absolute;left:30px;top:0;height:20px;border-left:1px dotted #999}
  .kid::after{content:"";position:absolute;left:30px;top:10px;width:10px;border-top:1px dotted #999}
  .kid.lastkid::before{height:10px}
  .cb{width:10px;height:10px;border:1px solid #111;background:#fff;margin-left:41px;display:flex;align-items:center;justify-content:center;flex:none}
  .ki{margin:0 2px;flex:none}
  .kid em{margin-left:8px}
  .hscroll{height:17px;display:flex;align-items:center;flex:none}
  .tl{width:0;height:0;border:4px solid transparent;border-right:4px solid #333;border-left:0;margin-left:4px}
  .tr{width:0;height:0;border:4px solid transparent;border-left:4px solid #333;border-right:0;margin-left:24px}
  .thumb{width:222px;height:14px;margin-left:12px;border:1px solid #999;border-radius:3px;background:linear-gradient(#f7f7f7 5px,#d4d4d4 5px);box-sizing:border-box;font:9px/10px "Liberation Sans",sans-serif;text-align:center;color:#333}
  .sash{height:14px;display:flex;align-items:center;padding:0 12px 0 9px;gap:5px;flex:none}
  .sash i{flex:1;height:1px;background:#bbb}
  .sash b{width:50px;height:5px;background:#d0d0d0;border:1px solid #bbb;box-sizing:border-box}
  .acc{height:23px;margin:0 12px 0 9px;display:flex;align-items:center;justify-content:space-between;background:linear-gradient(#f7f7f7 0 15px,#d4d4d4 15px);border-bottom:1px solid #888;box-sizing:border-box;font-size:13px;padding-left:6px;flex:none}
  .vv{width:22px;height:100%;border-left:1px solid #aaa;display:flex;align-items:center;justify-content:center;box-sizing:border-box}

  .canvas{flex:1;background:#000;position:relative;margin-left:1px}
  .fl{position:absolute;color:#fff}
  .log{left:103px;top:28px;width:256px}
  .yi{left:680px;top:33px;width:406px}
  .fhead{height:22px;background:linear-gradient(#555 0,#777 6px,#000 7px);border-radius:6px 6px 0 0;display:flex;align-items:center;font-size:13px;padding-left:9px;position:relative}
  .fhead b{flex:1}
  .yi .fhead b{font-size:12px;padding-top:1px}
  .fx{width:20px;height:20px;border-left:1px solid #888;text-align:center;font:700 16px/20px "Liberation Sans",sans-serif}
  .log .tri{margin:4px 6px 0 0;border-top-color:#ddd}
  .fbar{background:linear-gradient(#f7f7f7 0 8px,#d4d4d4 8px);height:31px;display:flex;align-items:center;justify-content:space-between;box-sizing:border-box;padding:2px 9px 0 11px}
  .yi .fbar{height:35px;padding:0 4px 0 6px}
  .triad{position:absolute;left:52px;top:648px;overflow:visible}

  .dlg{position:absolute;left:89px;top:82px;width:824px;height:606px;box-sizing:border-box;border:1px solid #e0e0e0;border-radius:5px 5px 3px 3px;background:linear-gradient(90deg,#777 0,#000 5px,#000 calc(100% - 5px),#888 100%);display:flex;flex-direction:column;padding:0 4px 4px 5px}
  .dhead{height:27px;display:flex;align-items:center;flex:none;margin:0 -4px 0 -5px;background:radial-gradient(ellipse 150px 38px at 25px 6px,#a8adb3 0,#7c8288 55%,transparent 100%),radial-gradient(ellipse 250px 30px at 100% 0,#b4bcc8 0,#68707c 50%,transparent 100%),#000;padding-left:5px;border-radius:4px 4px 0 0}
  .dlogo{margin-left:1px}
  .dtitle{margin-left:3px;color:#111;flex:1}
  .dclose{width:45px;height:18px;margin:-9px 6px 0 0;border-radius:0 0 4px 4px;background:linear-gradient(#b85040,#c84030 50%,#882010);border:1px solid #ddd;border-top:0;box-sizing:border-box;text-align:center;color:#fff;font:700 13px/17px "Liberation Sans",sans-serif}
  .dbody{flex:1;background:#f7f7f7;border:1px solid #999;display:grid;grid-template-columns:99px 1fr;grid-template-rows:38px 1fr 49px 22px 23px 5px;position:relative;min-height:0}
  .dtop{grid-column:1/3;display:flex;align-items:flex-start;padding:9px 0 0 18px}
  .dtop label{width:81px;font-size:12px;line-height:18px}
  .look{width:258px;height:21px;box-sizing:border-box;border:1px solid #888;border-right-color:#666;border-bottom-color:#666;background:#f7f7f7;display:flex;align-items:center;padding-left:3px;gap:4px}
  .sm{font-size:10px;flex:1;color:#222}
  .look .tri{margin-right:4px}
  .dtools{display:flex;align-items:center;gap:7px;margin:2px 0 0 18px}
  .big2{border-width:5px 5px 0;margin-left:-7px}
  .places{display:flex;flex-direction:column;align-items:center;gap:18px;margin:-2px 0 0 -2px}
  .place{height:45px;width:76px;display:flex;flex-direction:column;align-items:center;text-align:center;line-height:13px}
  .place span{margin-top:1px}
  .place.first{height:58px;margin-bottom:-13px}
  .files{min-width:0;padding-right:6px}
  .fh{height:19px;display:grid;grid-template-columns:305px 135px 135px 132px;border-bottom:1px solid #d8dde4;line-height:17px;font-size:12px}
  .fh span{padding-left:7px;border-right:1px solid #dde;position:relative;padding-top:1px}
  .fh .c-n{background:linear-gradient(#f7f7f7 0 10px,#d9e8f0 10px);border-left:1px solid #a0d0f0;border-right:1px solid #a0d0f0;padding-left:4px}
  .sort{position:absolute;left:148px;top:-2px;border:3px solid transparent;border-bottom:3px solid #70a0d0;border-top:0;width:0;height:0}
  .fr{margin:2px 0 0 2px;width:663px;height:20px;box-sizing:border-box;border:1px solid #b8d4f0;border-radius:3px;background:linear-gradient(#fafcff,#f2f7fc);display:grid;grid-template-columns:308px 135px 135px 83px;align-items:center;font:12px "Liberation Sans","Noto Sans CJK SC",sans-serif;color:#222}
  .c-f{display:flex;align-items:center;gap:3px;padding-left:5px;font-size:13px;color:#3a2810}
  .sz{text-align:right;padding-right:7px}
  .form{grid-column:1/3;grid-row:3;display:grid;grid-template-columns:96px 500px 110px;grid-template-rows:22px 22px;row-gap:5px;padding-left:99px;align-items:start}
  .form label{line-height:24px;font-size:12px}
  .fld{display:flex;align-items:center;justify-content:space-between;height:20px;box-sizing:border-box;border-top:1px solid #777;border-left:1px solid #777;padding-left:2px}
  .f2{height:19px;margin-top:1px;border-color:#999}
  .form .btn{margin-left:20px;width:90px;height:22px}
  .sel{background:#3390ff;color:#fff;font-size:10px;line-height:11px;padding:0 1px;width:73px;box-sizing:border-box;white-space:nowrap}
  .drop{width:17px;height:17px;border-right:2px solid #777;border-bottom:2px solid #777;background:#f7f7f7;display:flex;align-items:center;justify-content:center;box-sizing:border-box;margin-right:-1px}
  .btn{border-right:2px solid #888;border-bottom:2px solid #888;box-sizing:border-box;display:flex;align-items:center;justify-content:center;font-size:12px;background:#f7f7f7}
  .btn.ok{border:2px solid #666;border-width:1px 2px 3px 1px}
  .dfoot{grid-column:1/3;grid-row:5;padding-left:5px}
  .arg{width:117px;height:23px}
  .cursor{position:absolute;left:163px;top:80px}
  .grabber{position:absolute;right:0;bottom:0;width:9px;height:9px;background:repeating-linear-gradient(135deg,transparent 0 2px,#aaa 2px 3px);clip-path:polygon(100% 0,100% 100%,0 100%)}
</style>
